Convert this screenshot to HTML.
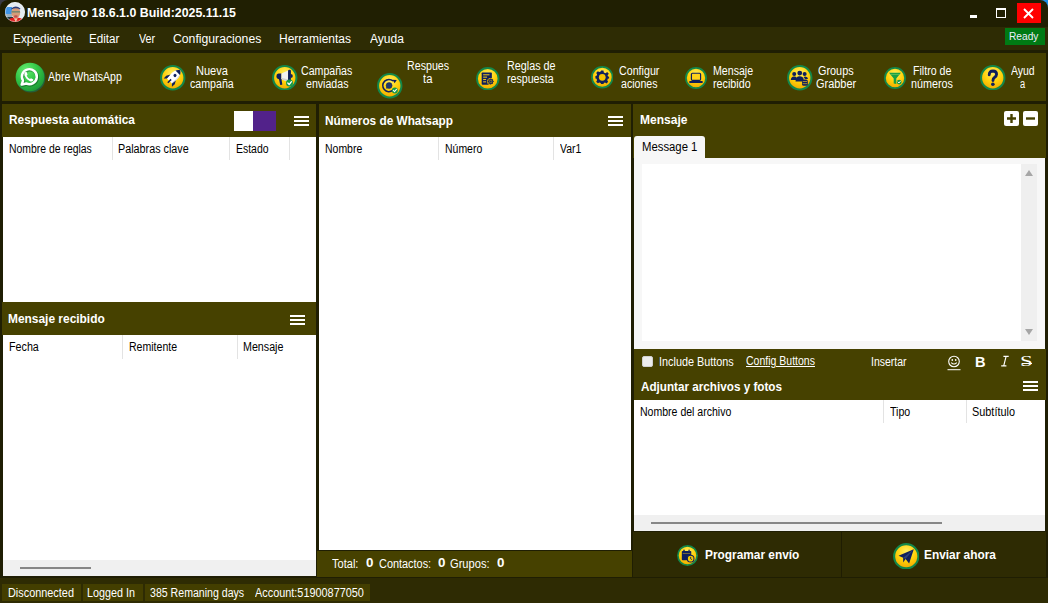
<!DOCTYPE html>
<html><head><meta charset="utf-8">
<style>
*{margin:0;padding:0;box-sizing:border-box}
html,body{width:1048px;height:603px;overflow:hidden;background:#1f1e03;font-family:"Liberation Sans",sans-serif;font-size:12px;color:#fff}
.a{position:absolute;white-space:nowrap;line-height:14px}
.r{transform:scaleX(0.87);transform-origin:0 0}
.b{font-weight:bold;transform:scaleX(0.98);transform-origin:0 0}
.m{font-size:12px}
.k{color:#000}
.sep{position:absolute;width:1px;background:#e3e3e3}
.ham{position:absolute;width:15px;height:10px}
.ham i{position:absolute;left:0;width:15px;height:2px;background:#fff}
</style></head><body>
<svg width="0" height="0" style="position:absolute"><defs>
<radialGradient id="yg" cx="50%" cy="30%" r="70%"><stop offset="0" stop-color="#ffee60"/><stop offset=".55" stop-color="#ffd10a"/><stop offset="1" stop-color="#f0a800"/></radialGradient>
</defs></svg>
<div class="a" style="left:0px;top:0px;width:12px;height:12px;background:#3a3b44;"></div>
<div class="a" style="left:1036px;top:0px;width:12px;height:12px;background:#1c8fe6;"></div>
<div class="a" style="left:0px;top:0px;width:1048px;height:27px;background:#201f02;border-radius:8px 8px 0 0"></div>
<svg class="a" style="left:5px;top:2px" width="20" height="20" viewBox="0 0 20 20">
<defs><clipPath id="av"><circle cx="10" cy="10" r="10"/></clipPath></defs>
<g clip-path="url(#av)"><rect width="20" height="20" fill="#e4ecf2"/><rect x="0" y="5" width="7" height="7" fill="#3f95e6"/><rect x="0" y="12" width="7" height="6" fill="#9ab0c0"/><rect x="2" y="15" width="6" height="3" fill="#1e3a40"/>
<ellipse cx="10.8" cy="10.6" rx="4.4" ry="5.6" fill="#d69c78"/><path d="M6.2 6.4 Q10.8 2.4 15.4 6.4 L15 7.6 Q10.8 5 6.6 7.6Z" fill="#2c3c78"/>
<rect x="6.6" y="9" width="8.4" height="1.6" fill="#7a8870"/><ellipse cx="10.8" cy="14.2" rx="1.9" ry=".9" fill="#c05050"/>
<path d="M2 21 L5 16.6 Q10.8 14.6 16.6 16.6 L19 21Z" fill="#e31c1c"/><path d="M8.8 16.2 L10.8 20 L12.8 16.2Z" fill="#e8c8a8"/></g>
<circle cx="10" cy="10" r="9.6" fill="none" stroke="#fff" stroke-opacity=".45" stroke-width=".8"/></svg>
<div class="a" style="left:26.79px;top:6px;color:#fff;font-weight:bold;font-size:12.3px;transform:scaleX(1.0058);transform-origin:0 0">Mensajero 18.6.1.0 Build:2025.11.15</div>
<div class="a" style="left:970px;top:15px;width:7px;height:3px;background:#fff;"></div>
<div class="a" style="left:996px;top:8px;width:10px;height:10px;border:1.5px solid #fff;border-top-width:2px"></div>
<div class="a" style="left:1017px;top:3px;width:24px;height:20px;background:#f00;"></div>
<svg class="a" style="left:1023px;top:8px" width="11" height="11" viewBox="0 0 11 11"><path d="M1 1L10 10M10 1L1 10" stroke="#fff" stroke-width="1.9"/></svg>
<div class="a" style="left:0px;top:27px;width:1048px;height:23px;background:#2e2c04;"></div>
<div class="a" style="left:13.05px;top:32px;color:#fff;font-size:12.5px;transform:scaleX(0.9508);transform-origin:0 0">Expediente</div>
<div class="a" style="left:89.07px;top:32px;color:#fff;font-size:12.5px;transform:scaleX(0.9312);transform-origin:0 0">Editar</div>
<div class="a" style="left:139.00px;top:32px;color:#fff;font-size:12.5px;transform:scaleX(0.8579);transform-origin:0 0">Ver</div>
<div class="a" style="left:173.22px;top:32px;color:#fff;font-size:12.5px;transform:scaleX(0.9775);transform-origin:0 0">Configuraciones</div>
<div class="a" style="left:279.04px;top:32px;color:#fff;font-size:12.5px;transform:scaleX(0.9595);transform-origin:0 0">Herramientas</div>
<div class="a" style="left:370.00px;top:32px;color:#fff;font-size:12.5px;transform:scaleX(0.9629);transform-origin:0 0">Ayuda</div>
<div class="a" style="left:1005px;top:28px;width:40px;height:17px;background:#007a14;"></div>
<div class="a" style="left:1009.48px;top:29px;color:#eef;font-size:10px;line-height:16px;transform:scaleX(1.0179);transform-origin:0 0">Ready</div>
<div class="a" style="left:2px;top:53px;width:1044px;height:48px;background:#454000;"></div>
<svg class="a" style="left:15px;top:62px" width="31" height="31" viewBox="0 0 24 24">
<defs><radialGradient id="wg" cx="35%" cy="25%" r="80%"><stop offset="0" stop-color="#66ec70"/><stop offset=".5" stop-color="#34c848"/><stop offset="1" stop-color="#1c9636"/></radialGradient></defs>
<circle cx="12.2" cy="12.3" r="11.3" fill="#235e3a"/><circle cx="11.6" cy="11.6" r="11.1" fill="url(#wg)"/>
<g transform="translate(10.6 11.2)">
<path d="M-5.4 6.3 L-4.4 3.2 A5.8 5.8 0 1 1 -1.9 5.4 Z" fill="none" stroke="#0e5a22" stroke-opacity=".55" stroke-width="2.6" stroke-linejoin="round" transform="translate(.5 .6)"/>
<path d="M-5.4 6.3 L-4.4 3.2 A5.8 5.8 0 1 1 -1.9 5.4 Z" fill="none" stroke="#fff" stroke-width="1.9" stroke-linejoin="round"/>
<path d="M-2.4 -3.6 Q-3.8 -2.8 -3.3 -0.9 Q-2.2 2.1 1 3.7 Q2.6 4.3 3.4 3.2 L3.6 2.4 L1.8 1.3 L1 2 Q-0.7 1.2 -1.6 -0.6 L-0.9 -1.4 L-1.6 -3.5Z" fill="#fff"/></g></svg>
<div class="a" style="left:48.10px;top:69.5px;color:#fff;;transform:scaleX(0.8786);transform-origin:0 0">Abre WhatsApp</div>
<svg class="a" style="left:160.25px;top:65.05px" width="25.5" height="25.5" viewBox="0 0 24 24"><circle cx="12" cy="12" r="11" fill="url(#yg)" stroke="#13874a" stroke-width="1.9"/><g transform="rotate(45 12 12)"><path d="M12 2 C15.8 4.5 16.2 9.5 15.4 16.4 L8.6 16.4 C7.8 9.5 8.2 4.5 12 2Z" fill="#fff"/>
<path d="M12 2 C13.5 3 14.5 4.1 15 5.4 L9 5.4 C9.5 4.1 10.5 3 12 2Z" fill="#0f1f5c"/><circle cx="12" cy="9" r="1.45" fill="#0f1f5c"/>
<path d="M8.4 11.4 L6.3 15 L6.5 18.6 L8.7 16.4Z M15.6 11.4 L17.7 15 L17.5 18.6 L15.3 16.4Z" fill="#0f1f5c"/><rect x="11.25" y="14.2" width="1.5" height="4.4" fill="#0f1f5c"/>
<path d="M15.4 6 C16.2 9.5 16 12 15.4 16.4 L14.5 16.4 C15 12 15.2 9.5 14.6 6Z" fill="#d4d8e4"/></g></svg>
<div class="a" style="left:195.78px;top:64px;color:#fff;;transform:scaleX(0.9206);transform-origin:0 0">Nueva</div>
<div class="a" style="left:190.40px;top:77px;color:#fff;;transform:scaleX(0.8857);transform-origin:0 0">campaña</div>
<svg class="a" style="left:272.25px;top:64.95px" width="25.5" height="25.5" viewBox="0 0 24 24"><circle cx="12" cy="12" r="11" fill="url(#yg)" stroke="#13874a" stroke-width="1.9"/><path d="M6.4 8.1 L8.9 8.1 L8.9 13.3 L6.4 13.3 Q4.2 13.3 4.2 10.7 Q4.2 8.1 6.4 8.1Z" fill="#0f1f5c"/>
<path d="M8.9 8.1 L15.2 5.1 L15.2 15.7 L8.9 13.3Z" fill="#f2f2f2"/><path d="M8.9 12 L15.2 13.6 L15.2 15.7 L8.9 13.3Z" fill="#d0d0d0"/><rect x="15.1" y="4.4" width="2.7" height="12.2" rx="1.3" fill="#0f1f5c"/>
<path d="M17.6 8.4 Q19.6 8.6 19.6 10.3 Q19.6 12.1 17.6 12.2Z" fill="#0f1f5c"/><path d="M6.5 13.2 L8.9 13.2 L9.7 18.4 Q8.7 19 7.7 18.5Z" fill="#0f1f5c"/><circle cx="16.5" cy="17" r="3.3" fill="#169a48"/><path d="M14.85 17 L16.17 18.32 L18.315 15.68" stroke="#fff" stroke-width="1.254" fill="none" stroke-linecap="round" stroke-linejoin="round"/></svg>
<div class="a" style="left:301.12px;top:64px;color:#fff;;transform:scaleX(0.8842);transform-origin:0 0">Campañas</div>
<div class="a" style="left:306.00px;top:77px;color:#fff;;transform:scaleX(0.8833);transform-origin:0 0">enviadas</div>
<svg class="a" style="left:377.25px;top:73.25px" width="25.5" height="25.5" viewBox="0 0 24 24"><circle cx="12" cy="12" r="11" fill="url(#yg)" stroke="#13874a" stroke-width="1.9"/><path d="M15.2 7.6 A5.8 5.8 0 1 0 14.8 16.4" fill="none" stroke="#0f1f5c" stroke-width="1.4"/><path d="M14.6 6.4 L18.6 6.6 L16.6 9.6Z" fill="#0f1f5c"/>
<circle cx="11.4" cy="11.8" r="2.8" fill="#223a68" stroke="#16285a" stroke-width=".5"/><path d="M8.6 14.8 L9 12.6 L10.6 14.2Z" fill="#223a68"/><circle cx="16.8" cy="16.4" r="2.8" fill="#169a48"/><path d="M15.4 16.4 L16.52 17.52 L18.34 15.28" stroke="#fff" stroke-width="1.0639999999999998" fill="none" stroke-linecap="round" stroke-linejoin="round"/></svg>
<div class="a" style="left:407.41px;top:59px;color:#fff;;transform:scaleX(0.8891);transform-origin:0 0">Respues</div>
<div class="a" style="left:423.00px;top:72px;color:#fff;;transform:scaleX(0.9400);transform-origin:0 0">ta</div>
<svg class="a" style="left:476.25px;top:66.95px" width="23.5" height="23.5" viewBox="0 0 24 24"><circle cx="12" cy="12" r="11" fill="url(#yg)" stroke="#13874a" stroke-width="1.9"/><rect x="5.8" y="5.6" width="10.4" height="12.4" rx="0.8" fill="#0f1f5c"/>
<rect x="7.3" y="7.4" width="6.5" height="1.1" fill="#e8c020"/><rect x="7.3" y="9.8" width="4" height="1.1" fill="#e8c020"/><rect x="7.3" y="12.2" width="3" height="1.1" fill="#e8c020"/><rect x="7.3" y="14.6" width="3" height="1.1" fill="#e8c020"/>
<g transform="translate(15 14.8)"><circle r="3.6" fill="#f5c000"/><path d="M0 -3.4 L0.9 -2.2 2.4 -2.4 2.2 -0.9 3.4 0 2.2 0.9 2.4 2.4 0.9 2.2 0 3.4 -0.9 2.2 -2.4 2.4 -2.2 0.9 -3.4 0 -2.2 -0.9 -2.4 -2.4 -0.9 -2.2Z" fill="#0f1f5c"/><circle r="1.3" fill="#1b3060" stroke="#f5c000" stroke-width=".5"/></g></svg>
<div class="a" style="left:507.10px;top:59px;color:#fff;;transform:scaleX(0.8981);transform-origin:0 0">Reglas de</div>
<div class="a" style="left:507.12px;top:72px;color:#fff;;transform:scaleX(0.8846);transform-origin:0 0">respuesta</div>
<svg class="a" style="left:590.55px;top:66.35px" width="22.5" height="22.5" viewBox="0 0 24 24"><circle cx="12" cy="12" r="11" fill="url(#yg)" stroke="#13874a" stroke-width="1.9"/><g transform="translate(12 12)"><path d="M-1.3 -7.2 L1.3 -7.2 1.7 -5.2 3.6 -4.3 5.2 -5.6 7 -3.8 5.7 -2.1 6.3 -0.9 7.3 -0.6 7.3 1.3 5.9 1.7 5.4 3.4 6.3 4.8 4.5 6.6 3 5.6 1.7 6.2 1.3 7.3 -1.3 7.3 -1.7 6.1 -3.2 5.5 -4.6 6.5 -6.5 4.7 -5.5 3.2 -6.1 1.7 -7.3 1.3 -7.3 -1.3 -6 -1.7 -5.5 -3.2 -6.5 -4.6 -4.7 -6.5 -3.2 -5.5 -1.7 -6.1Z" fill="#0f1f5c"/>
<circle r="3.6" fill="#f5c400"/></g></svg>
<div class="a" style="left:618.61px;top:64px;color:#fff;;transform:scaleX(0.8909);transform-origin:0 0">Configur</div>
<div class="a" style="left:621.00px;top:77px;color:#fff;;transform:scaleX(0.8829);transform-origin:0 0">aciones</div>
<svg class="a" style="left:685.0px;top:66.7px" width="22" height="22" viewBox="0 0 24 24"><circle cx="12" cy="12" r="11" fill="url(#yg)" stroke="#13874a" stroke-width="1.9"/><rect x="7" y="6.8" width="10" height="7.8" rx="1.2" fill="#ffd21a" stroke="#0f1f5c" stroke-width="1.3"/>
<rect x="4.6" y="15.2" width="14.8" height="2.2" rx=".8" fill="#0f1f5c"/></svg>
<div class="a" style="left:713.42px;top:64px;color:#fff;;transform:scaleX(0.8841);transform-origin:0 0">Mensaje</div>
<div class="a" style="left:713.40px;top:77px;color:#fff;;transform:scaleX(0.8951);transform-origin:0 0">recibido</div>
<svg class="a" style="left:787.25px;top:65.25px" width="25.5" height="25.5" viewBox="0 0 24 24"><circle cx="12" cy="12" r="11" fill="url(#yg)" stroke="#13874a" stroke-width="1.9"/><circle cx="6.8" cy="8.4" r="1.9" fill="#0f1f5c"/><circle cx="12" cy="7.6" r="2.3" fill="#0f1f5c"/><circle cx="16.6" cy="8.4" r="1.9" fill="#0f1f5c"/>
<path d="M3.6 14.2 Q3.8 10.6 6.8 10.8 Q8.6 10.8 9.3 12.2 L8.6 14.2Z" fill="#0f1f5c"/><path d="M8 15.5 Q8 10.6 12 10.6 Q15 10.6 15.8 13.5 L14.5 15.5Z" fill="#0f1f5c"/><path d="M15.5 11.2 Q16.2 10.8 17.2 10.8 Q19.6 11 19.8 13.2 L17 13.2Z" fill="#0f1f5c"/>
<rect x="14.2" y="13.6" width="5.4" height="6" rx="1.6" fill="#0f1f5c"/><rect x="14.8" y="15.3" width="4.2" height=".7" fill="#d8b020"/><rect x="14.8" y="17.3" width="4.2" height=".7" fill="#d8b020"/></svg>
<div class="a" style="left:818.09px;top:64px;color:#fff;;transform:scaleX(0.9053);transform-origin:0 0">Groups</div>
<div class="a" style="left:816.09px;top:77px;color:#fff;;transform:scaleX(0.9116);transform-origin:0 0">Grabber</div>
<svg class="a" style="left:884.0px;top:67.0px" width="22" height="22" viewBox="0 0 24 24"><circle cx="12" cy="12" r="11" fill="url(#yg)" stroke="#13874a" stroke-width="1.9"/><path d="M5.5 6.2 L18.5 6.2 L13.4 12.6 L13.4 18.6 L10.6 18 L10.6 12.6Z" fill="#18a044"/><rect x="7" y="7.6" width="10" height=".8" fill="#7cd060" opacity=".8"/><circle cx="16.6" cy="16.4" r="2.6" fill="#169a48"/><path d="M15.3 16.4 L16.34 17.439999999999998 L18.03 15.36" stroke="#fff" stroke-width="0.9880000000000001" fill="none" stroke-linecap="round" stroke-linejoin="round"/></svg>
<div class="a" style="left:912.62px;top:64px;color:#fff;;transform:scaleX(0.8833);transform-origin:0 0">Filtro de</div>
<div class="a" style="left:911.30px;top:77px;color:#fff;;transform:scaleX(0.8978);transform-origin:0 0">números</div>
<svg class="a" style="left:980.25px;top:64.95px" width="25.5" height="25.5" viewBox="0 0 24 24"><circle cx="12" cy="12" r="11" fill="url(#yg)" stroke="#13874a" stroke-width="1.9"/><path d="M8.7 9.3 Q8.6 5.6 12.2 5.6 Q15.6 5.7 15.6 8.8 Q15.6 10.6 13.6 11.8 Q12.2 12.6 12.2 14.6" fill="none" stroke="#0f1f5c" stroke-width="2.7" stroke-linecap="round"/><circle cx="12.1" cy="18.1" r="1.7" fill="#0f1f5c"/></svg>
<div class="a" style="left:1011.00px;top:64px;color:#fff;;transform:scaleX(0.8704);transform-origin:0 0">Ayud</div>
<div class="a" style="left:1019.60px;top:77px;color:#fff;;transform:scaleX(0.7714);transform-origin:0 0">a</div>
<div class="a" style="left:0px;top:101px;width:1048px;height:3px;background:#1f1e03;"></div>
<div class="a" style="left:2px;top:104px;width:314px;height:33px;background:#464100;"></div>
<div class="a" style="left:3px;top:137px;width:313px;height:165px;background:#fff;"></div>
<div class="a" style="left:2px;top:302px;width:314px;height:33px;background:#464100;"></div>
<div class="a" style="left:3px;top:335px;width:313px;height:225px;background:#fff;"></div>
<div class="a" style="left:3px;top:560px;width:313px;height:16px;background:#f0f0f0;"></div>
<div class="a" style="left:20px;top:567px;width:71px;height:2px;background:#878787;"></div>
<div class="a" style="left:319px;top:104px;width:312px;height:33px;background:#464100;"></div>
<div class="a" style="left:319px;top:137px;width:312px;height:413px;background:#fff;"></div>
<div class="a" style="left:317px;top:551px;width:315px;height:26px;background:#464100;"></div>
<div class="a" style="left:633px;top:104px;width:413px;height:54px;background:#464100;"></div>
<div class="a" style="left:634px;top:158px;width:411px;height:191px;background:#f7f7f7;"></div>
<div class="a" style="left:642px;top:164px;width:379px;height:177px;background:#fff;"></div>
<div class="a" style="left:1021px;top:164px;width:16px;height:177px;background:#efefef;"></div>
<div class="a" style="left:634px;top:136px;width:71px;height:22px;background:#f7f7f7;border-radius:3px 3px 0 0"></div>
<svg class="a" style="left:1024px;top:169px" width="10" height="8" viewBox="0 0 10 8"><path d="M1 7L5 1L9 7Z" fill="#a6a6a6"/></svg>
<svg class="a" style="left:1024px;top:328px" width="10" height="8" viewBox="0 0 10 8"><path d="M1 1L5 7L9 1Z" fill="#a6a6a6"/></svg>
<div class="a" style="left:634px;top:349px;width:412px;height:51px;background:#464100;"></div>
<div class="a" style="left:634px;top:400px;width:411px;height:115px;background:#fff;"></div>
<div class="a" style="left:634px;top:515px;width:411px;height:16px;background:#f0f0f0;"></div>
<div class="a" style="left:651px;top:522px;width:291px;height:2px;background:#878787;"></div>
<div class="a" style="left:633px;top:532px;width:413px;height:45px;background:#2e2b03;"></div>
<div class="a" style="left:841px;top:532px;width:1px;height:45px;background:#1f1d02;"></div>
<div class="a" style="left:9.41px;top:113px;color:#fff;font-weight:bold;transform:scaleX(0.9882);transform-origin:0 0">Respuesta automática</div>
<div class="a" style="left:234px;top:111px;width:19px;height:20px;background:#fff;"></div>
<div class="a" style="left:253px;top:111px;width:23px;height:20px;background:#52228a;"></div>
<div class="ham" style="left:294px;top:116px"><i style="top:0"></i><i style="top:4px"></i><i style="top:8px"></i></div>
<div class="a" style="left:8.63px;top:142px;color:#000;;transform:scaleX(0.8681);transform-origin:0 0">Nombre de reglas</div>
<div class="a" style="left:118.10px;top:142px;color:#000;;transform:scaleX(0.8987);transform-origin:0 0">Palabras clave</div>
<div class="a" style="left:235.73px;top:142px;color:#000;;transform:scaleX(0.8722);transform-origin:0 0">Estado</div>
<div class="sep" style="left:112px;top:137px;height:23px"></div>
<div class="sep" style="left:229px;top:137px;height:23px"></div>
<div class="sep" style="left:289px;top:137px;height:23px"></div>
<div class="a" style="left:8.41px;top:312px;color:#fff;font-weight:bold;transform:scaleX(0.9937);transform-origin:0 0">Mensaje recibido</div>
<div class="ham" style="left:290px;top:315px"><i style="top:0"></i><i style="top:4px"></i><i style="top:8px"></i></div>
<div class="a" style="left:8.51px;top:340px;color:#000;;transform:scaleX(0.8938);transform-origin:0 0">Fecha</div>
<div class="a" style="left:128.52px;top:340px;color:#000;;transform:scaleX(0.8792);transform-origin:0 0">Remitente</div>
<div class="a" style="left:243.31px;top:340px;color:#000;;transform:scaleX(0.8909);transform-origin:0 0">Mensaje</div>
<div class="sep" style="left:122px;top:335px;height:24px"></div>
<div class="sep" style="left:237px;top:335px;height:24px"></div>
<div class="a" style="left:324.72px;top:114px;color:#fff;font-weight:bold;transform:scaleX(0.9837);transform-origin:0 0">Números de Whatsapp</div>
<div class="ham" style="left:608px;top:116px"><i style="top:0"></i><i style="top:4px"></i><i style="top:8px"></i></div>
<div class="a" style="left:324.83px;top:142px;color:#000;;transform:scaleX(0.8732);transform-origin:0 0">Nombre</div>
<div class="a" style="left:444.53px;top:142px;color:#000;;transform:scaleX(0.8732);transform-origin:0 0">Número</div>
<div class="a" style="left:560.00px;top:142px;color:#000;;transform:scaleX(0.8667);transform-origin:0 0">Var1</div>
<div class="sep" style="left:438px;top:137px;height:23px"></div>
<div class="sep" style="left:553px;top:137px;height:23px"></div>
<div class="a" style="left:332.40px;top:557px;color:#fff;;transform:scaleX(0.9214);transform-origin:0 0">Total:</div>
<div class="a" style="left:366.20px;top:556px;color:#fff;font-weight:bold;font-size:13.6px;transform:scaleX(0.9857);transform-origin:0 0">0</div>
<div class="a" style="left:378.89px;top:557px;color:#fff;;transform:scaleX(0.9091);transform-origin:0 0">Contactos:</div>
<div class="a" style="left:438.40px;top:556px;color:#fff;font-weight:bold;font-size:13.6px;transform:scaleX(0.9857);transform-origin:0 0">0</div>
<div class="a" style="left:450.07px;top:557px;color:#fff;;transform:scaleX(0.9268);transform-origin:0 0">Grupos:</div>
<div class="a" style="left:496.50px;top:556px;color:#fff;font-weight:bold;font-size:13.6px;transform:scaleX(0.9857);transform-origin:0 0">0</div>
<div class="a" style="left:639.60px;top:113px;color:#fff;font-weight:bold;transform:scaleX(1.0022);transform-origin:0 0">Mensaje</div>
<div class="a" style="left:641.56px;top:140px;color:#000;;transform:scaleX(0.9439);transform-origin:0 0">Message 1</div>
<svg class="a" style="left:1004px;top:111px" width="15" height="15" viewBox="0 0 15 15"><rect width="15" height="15" rx="2" fill="#fff"/><path d="M7.5 3V12M3 7.5H12" stroke="#464100" stroke-width="2.4"/></svg>
<svg class="a" style="left:1023px;top:111px" width="15" height="15" viewBox="0 0 15 15"><rect width="15" height="15" rx="2" fill="#fff"/><path d="M3 7.5H12" stroke="#464100" stroke-width="2.4"/></svg>
<div class="a" style="left:642px;top:355.5px;width:11px;height:11.5px;background:#ededed;border-radius:2px;border:1px solid #d0d0d0"></div>
<div class="a" style="left:659.10px;top:355px;color:#fff;;transform:scaleX(0.9037);transform-origin:0 0">Include Buttons</div>
<div class="a" style="left:745.60px;top:354px;color:#fff;text-decoration:underline;transform:scaleX(0.8759);transform-origin:0 0">Config Buttons</div>
<div class="a" style="left:871.13px;top:355px;color:#fff;;transform:scaleX(0.8725);transform-origin:0 0">Insertar</div>
<svg class="a" style="left:946px;top:355px" width="16" height="16" viewBox="0 0 16 16"><circle cx="8" cy="6.5" r="5.3" fill="none" stroke="#fff" stroke-width="1.1"/><ellipse cx="6.3" cy="5" rx=".85" ry="1.1" fill="#fff"/><ellipse cx="9.7" cy="5" rx=".85" ry="1.1" fill="#fff"/><path d="M5.2 7.6 Q8 10.4 10.8 7.6" fill="none" stroke="#fff" stroke-width="1.1"/><rect x="1.5" y="14.2" width="13" height="1" fill="#fff"/></svg>
<div class="a" style="left:974.96px;top:354.6px;color:#fff;font-weight:bold;font-size:14px;transform:scaleX(1.0444);transform-origin:0 0">B</div>
<svg class="a" style="left:1000px;top:355px" width="10" height="12" viewBox="0 0 10 12"><path d="M3.4 1.3H8.7M1.2 10.9H6.4M6.1 1.3L3.7 10.9" stroke="#fff" stroke-width="1.15" fill="none"/></svg>
<div class="a" style="left:1020.37px;top:354.5px;color:#fff;font-family:Liberation Serif;font-size:14px;transform:scaleX(1.6333);transform-origin:0 0">S</div>
<div class="a" style="left:1022px;top:362.6px;width:10px;height:1px;background:#fff;"></div>
<div class="a" style="left:641.40px;top:380px;color:#fff;font-weight:bold;transform:scaleX(0.9743);transform-origin:0 0">Adjuntar archivos y fotos</div>
<div class="ham" style="left:1023px;top:381px"><i style="top:0"></i><i style="top:4px"></i><i style="top:8px"></i></div>
<div class="a" style="left:639.52px;top:405px;color:#000;;transform:scaleX(0.8777);transform-origin:0 0">Nombre del archivo</div>
<div class="a" style="left:890.00px;top:405px;color:#000;;transform:scaleX(0.8826);transform-origin:0 0">Tipo</div>
<div class="a" style="left:972.39px;top:405px;color:#000;;transform:scaleX(0.9065);transform-origin:0 0">Subtítulo</div>
<div class="sep" style="left:883px;top:400px;height:23px"></div>
<div class="sep" style="left:966px;top:400px;height:23px"></div>
<svg class="a" style="left:676.5px;top:545.2px" width="21" height="21" viewBox="0 0 24 24"><circle cx="12" cy="12" r="11" fill="url(#yg)" stroke="#13874a" stroke-width="1.9"/><rect x="5.5" y="6.8" width="10.8" height="10.6" rx="1" fill="#0f1f5c"/><rect x="7.2" y="5" width="1.6" height="3" rx=".8" fill="#0f1f5c"/><rect x="13" y="5" width="1.6" height="3" rx=".8" fill="#1b3060"/>
<rect x="6.5" y="9.2" width="8.8" height=".8" fill="#d8b020" opacity=".7"/>
<circle cx="15.6" cy="15.6" r="3.8" fill="#f5c800" stroke="#0f1f5c" stroke-width="1.2"/><path d="M15.6 13.6V15.8L17 16.8" stroke="#0f1f5c" stroke-width="1" fill="none"/></svg>
<div class="a" style="left:704.51px;top:548px;color:#fff;font-weight:bold;transform:scaleX(0.9894);transform-origin:0 0">Programar envío</div>
<svg class="a" style="left:892.75px;top:542.75px" width="26.5" height="26.5" viewBox="0 0 24 24"><circle cx="12" cy="12" r="11" fill="url(#yg)" stroke="#13874a" stroke-width="1.9"/><path d="M5 11.6 L18.8 5.6 L14.6 18.6 L11.4 14.6 L9.2 17.6 L9.2 13.4Z" fill="#0f1f5c"/><path d="M9.2 13.4 L18.8 5.6 L11.4 14.6Z" fill="#2a3e78"/></svg>
<div class="a" style="left:923.61px;top:548px;color:#fff;font-weight:bold;transform:scaleX(0.9889);transform-origin:0 0">Enviar ahora</div>
<div class="a" style="left:0px;top:578px;width:1048px;height:25px;background:#2e2b03;"></div>
<div class="a" style="left:2px;top:584px;width:79px;height:17px;background:#433e00;"></div>
<div class="a" style="left:83px;top:584px;width:60px;height:17px;background:#433e00;"></div>
<div class="a" style="left:145px;top:584px;width:225px;height:17px;background:#433e00;"></div>
<div class="a" style="left:7.69px;top:586px;color:#fff;;transform:scaleX(0.9070);transform-origin:0 0">Disconnected</div>
<div class="a" style="left:87.40px;top:586px;color:#fff;;transform:scaleX(0.8981);transform-origin:0 0">Logged In</div>
<div class="a" style="left:149.52px;top:586px;color:#fff;;transform:scaleX(0.8819);transform-origin:0 0">385 Remaning days</div>
<div class="a" style="left:254.90px;top:586px;color:#fff;;transform:scaleX(0.9067);transform-origin:0 0">Account:51900877050</div>
</body></html>
